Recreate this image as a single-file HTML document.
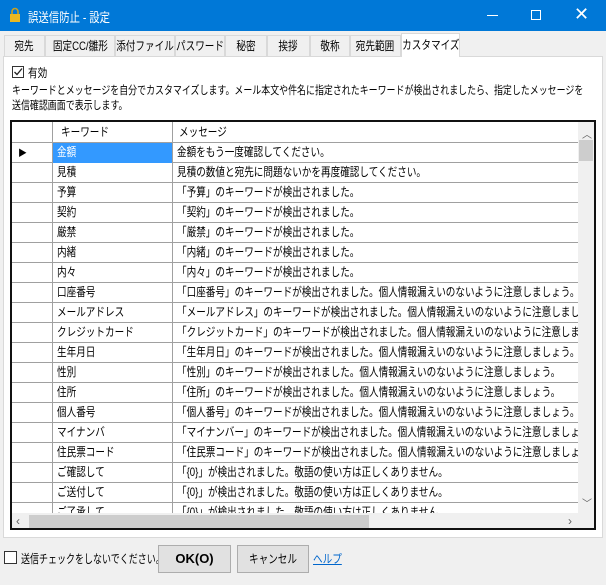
<!DOCTYPE html>
<html><head><meta charset="utf-8"><style>
*{box-sizing:border-box;margin:0;padding:0}
body{width:606px;height:585px;background:#f0f0f0;font-family:"Liberation Sans","Noto Sans CJK JP",sans-serif;font-size:12px;color:#000;position:relative;overflow:hidden}
.abs{position:absolute}
.n{display:inline-block;transform:scaleX(.8);transform-origin:0 50%;white-space:nowrap}
.nc{display:inline-block;transform:scaleX(.8);transform-origin:50% 50%;white-space:nowrap;flex:none}
.title{left:0;top:0;width:606px;height:31px;background:#0078d7;color:#fff}
.tab{position:absolute;top:35px;height:21px;border:1px solid #d9d9d9;border-bottom:none;background:#f0f0f0;display:flex;justify-content:center;line-height:20px;font-size:12px;white-space:nowrap}
.tab.sel{top:33px;height:24px;background:#fff;border-color:#d9d9d9;z-index:2}
.panel{left:3px;top:56px;width:600px;height:482px;background:#fff;border:1px solid #d9d9d9}
.grid{left:10px;top:120px;width:586px;height:410px;border:2px solid #111;background:#fff;overflow:hidden}
.row{position:absolute;left:0;width:566px;height:20px;border-bottom:1px solid #a0a0a0;line-height:19px;white-space:nowrap}
.c{position:absolute;top:0;height:20px;border-right:1px solid #a0a0a0;overflow:hidden;padding-left:4px}
.c0{left:0;width:41px}
.c1{left:41px;width:120px}
.c2{left:161px;width:405px;border-right:none}
.btn{position:absolute;top:545px;height:28px;border:1px solid #adadad;background:#e1e1e1;display:flex;justify-content:center;line-height:26px}
</style></head><body>
<div class="abs title">
 <svg class="abs" style="left:9px;top:7px" width="12" height="16" viewBox="0 0 12 16"><path d="M3 7V4.5a3 3 0 0 1 6 0V7" fill="none" stroke="#c8a020" stroke-width="1.6"/><rect x="1" y="7" width="10" height="8" fill="#e8b820"/></svg>
 <div class="abs" style="left:28px;top:7px;font-size:13px"><span class="n">誤送信防止 - 設定</span></div>
 <div class="abs" style="left:487px;top:15px;width:11px;height:1px;background:#fff"></div>
 <div class="abs" style="left:531px;top:10px;width:10px;height:10px;border:1px solid #fff"></div>
 <div class="abs" style="left:574px;top:4px;font-size:18px;line-height:20px">✕</div>
</div>
<div class="abs panel"></div>
<div class="tab" style="left:4px;width:41px"><span class="nc">宛先</span></div>
<div class="tab" style="left:45px;width:70px"><span class="nc">固定CC/雛形</span></div>
<div class="tab" style="left:115px;width:60px"><span class="nc">添付ファイル</span></div>
<div class="tab" style="left:175px;width:50px"><span class="nc">パスワード</span></div>
<div class="tab" style="left:225px;width:42px"><span class="nc">秘密</span></div>
<div class="tab" style="left:267px;width:43px"><span class="nc">挨拶</span></div>
<div class="tab" style="left:310px;width:40px"><span class="nc">敬称</span></div>
<div class="tab" style="left:350px;width:51px"><span class="nc">宛先範囲</span></div>
<div class="tab sel" style="left:401px;width:59px;line-height:22px"><span class="nc">カスタマイズ</span></div>
<div class="abs" style="left:12px;top:66px;width:12px;height:12px;border:1px solid #333;background:#fff"><svg width="10" height="10" viewBox="0 0 10 10" style="position:absolute;left:0;top:0"><path d="M1.5 5l2.5 2.5 5-6" fill="none" stroke="#222" stroke-width="1.3"/></svg></div>
<div class="abs" style="left:28px;top:64px"><span class="n">有効</span></div>
<div class="abs" style="left:12px;top:84px;font-size:11.2px;line-height:15px;width:700px"><span class="n">キーワードとメッセージを自分でカスタマイズします。メール本文や件名に指定されたキーワードが検出されましたら、指定したメッセージを</span><br><span class="n">送信確認画面で表示します。</span></div>
<div class="abs grid">
 <div class="row" style="top:0;height:21px;border-bottom:1px solid #a0a0a0"><div class="c c0"></div><div class="c c1" style="padding-left:8px;line-height:20px"><span class="n">キーワード</span></div><div class="c c2" style="padding-left:6px;line-height:20px"><span class="n">メッセージ</span></div></div>
 <div class="row" style="top:21px"><div class="c c0"><span style="font-size:9px;padding-left:2px">▶</span></div><div class="c c1" style="background:#3399ff;color:#fff"><span class="n">金額</span></div><div class="c c2"><span class="n">金額をもう一度確認してください。</span></div></div>
 <div class="row" style="top:41px"><div class="c c0"></div><div class="c c1"><span class="n">見積</span></div><div class="c c2"><span class="n">見積の数値と宛先に問題ないかを再度確認してください。</span></div></div>
 <div class="row" style="top:61px"><div class="c c0"></div><div class="c c1"><span class="n">予算</span></div><div class="c c2"><span class="n">「予算」のキーワードが検出されました。</span></div></div>
 <div class="row" style="top:81px"><div class="c c0"></div><div class="c c1"><span class="n">契約</span></div><div class="c c2"><span class="n">「契約」のキーワードが検出されました。</span></div></div>
 <div class="row" style="top:101px"><div class="c c0"></div><div class="c c1"><span class="n">厳禁</span></div><div class="c c2"><span class="n">「厳禁」のキーワードが検出されました。</span></div></div>
 <div class="row" style="top:121px"><div class="c c0"></div><div class="c c1"><span class="n">内緒</span></div><div class="c c2"><span class="n">「内緒」のキーワードが検出されました。</span></div></div>
 <div class="row" style="top:141px"><div class="c c0"></div><div class="c c1"><span class="n">内々</span></div><div class="c c2"><span class="n">「内々」のキーワードが検出されました。</span></div></div>
 <div class="row" style="top:161px"><div class="c c0"></div><div class="c c1"><span class="n">口座番号</span></div><div class="c c2"><span class="n">「口座番号」のキーワードが検出されました。個人情報漏えいのないように注意しましょう。</span></div></div>
 <div class="row" style="top:181px"><div class="c c0"></div><div class="c c1"><span class="n">メールアドレス</span></div><div class="c c2"><span class="n">「メールアドレス」のキーワードが検出されました。個人情報漏えいのないように注意しましょう。</span></div></div>
 <div class="row" style="top:201px"><div class="c c0"></div><div class="c c1"><span class="n">クレジットカード</span></div><div class="c c2"><span class="n">「クレジットカード」のキーワードが検出されました。個人情報漏えいのないように注意しましょう。</span></div></div>
 <div class="row" style="top:221px"><div class="c c0"></div><div class="c c1"><span class="n">生年月日</span></div><div class="c c2"><span class="n">「生年月日」のキーワードが検出されました。個人情報漏えいのないように注意しましょう。</span></div></div>
 <div class="row" style="top:241px"><div class="c c0"></div><div class="c c1"><span class="n">性別</span></div><div class="c c2"><span class="n">「性別」のキーワードが検出されました。個人情報漏えいのないように注意しましょう。</span></div></div>
 <div class="row" style="top:261px"><div class="c c0"></div><div class="c c1"><span class="n">住所</span></div><div class="c c2"><span class="n">「住所」のキーワードが検出されました。個人情報漏えいのないように注意しましょう。</span></div></div>
 <div class="row" style="top:281px"><div class="c c0"></div><div class="c c1"><span class="n">個人番号</span></div><div class="c c2"><span class="n">「個人番号」のキーワードが検出されました。個人情報漏えいのないように注意しましょう。</span></div></div>
 <div class="row" style="top:301px"><div class="c c0"></div><div class="c c1"><span class="n">マイナンバ</span></div><div class="c c2"><span class="n">「マイナンバー」のキーワードが検出されました。個人情報漏えいのないように注意しましょう。</span></div></div>
 <div class="row" style="top:321px"><div class="c c0"></div><div class="c c1"><span class="n">住民票コード</span></div><div class="c c2"><span class="n">「住民票コード」のキーワードが検出されました。個人情報漏えいのないように注意しましょう。</span></div></div>
 <div class="row" style="top:341px"><div class="c c0"></div><div class="c c1"><span class="n">ご確認して</span></div><div class="c c2"><span class="n">「{0}」が検出されました。敬語の使い方は正しくありません。</span></div></div>
 <div class="row" style="top:361px"><div class="c c0"></div><div class="c c1"><span class="n">ご送付して</span></div><div class="c c2"><span class="n">「{0}」が検出されました。敬語の使い方は正しくありません。</span></div></div>
 <div class="row" style="top:381px"><div class="c c0"></div><div class="c c1"><span class="n">ご了承して</span></div><div class="c c2"><span class="n">「{0}」が検出されました。敬語の使い方は正しくありません。</span></div></div>
 <div class="abs" style="left:566px;top:0;width:16px;height:391px;background:#f0f0f0"></div>
 <div class="abs" style="left:570px;top:4px;font-size:10px;color:#606060">︿</div>
 <div class="abs" style="left:567px;top:18px;width:14px;height:21px;background:#cdcdcd"></div>
 <div class="abs" style="left:570px;top:373px;font-size:10px;color:#606060">﹀</div>
 <div class="abs" style="left:0;top:391px;width:582px;height:17px;background:#f0f0f0"></div>
 <div class="abs" style="left:4px;top:392px;font-size:12px;color:#606060">‹</div>
 <div class="abs" style="left:17px;top:393px;width:340px;height:14px;background:#cdcdcd"></div>
 <div class="abs" style="left:556px;top:392px;font-size:12px;color:#606060">›</div>
</div>
<div class="abs" style="left:4px;top:551px;width:13px;height:13px;border:1px solid #333;background:#fff"></div>
<div class="abs" style="left:21px;top:550px"><span class="n" style="transform:scaleX(.75)">送信チェックをしないでください。</span></div>
<div class="btn" style="left:158px;width:73px;font-weight:bold;font-size:13px">OK(O)</div>
<div class="btn" style="left:237px;width:72px"><span class="nc">キャンセル</span></div>
<div class="abs" style="left:313px;top:550px;color:#0066cc"><span class="n" style="text-decoration:underline">ヘルプ</span></div>
</body></html>
